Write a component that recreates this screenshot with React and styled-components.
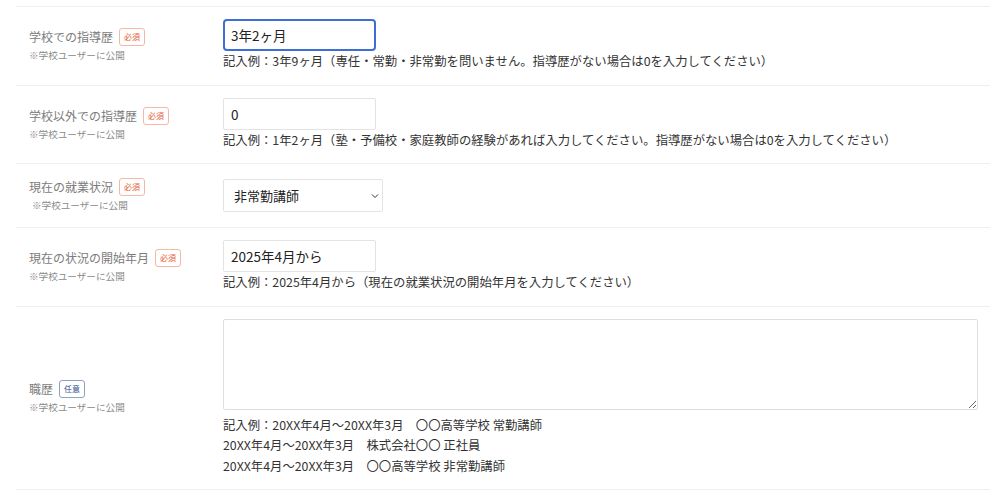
import React from "react";
import styled, { createGlobalStyle } from "styled-components";

const GlobalStyle = createGlobalStyle`
  html, body {
    margin: 0;
    padding: 0;
    background: #fff;
  }
  body {
    font-family: "Noto Sans CJK JP", "Noto Sans", sans-serif;
    color: #333;
  }
`;

const Form = styled.div`
  padding: 6px 9px 0 16px;
`;

const Row = styled.div`
  display: flex;
  align-items: center;
  border-top: 1px solid #efefef;
  padding: ${(p) => (p.$roomy ? "14px 12px 15px 13px" : "12px 12px 13px 13px")};

  &:last-child {
    border-bottom: 1px solid #efefef;
  }
`;

const LabelCol = styled.div`
  width: 194px;
  flex-shrink: 0;
  display: flex;
  flex-direction: column;
  gap: 2px;
`;

const LabelLine = styled.div`
  display: flex;
  align-items: center;
  gap: 6px;
  font-size: 12px;
  line-height: 18px;
  color: #7b7b7b;
`;

const Badge = styled.span`
  display: inline-block;
  font-size: 8px;
  line-height: 16px;
  padding: 0 4px;
  border-radius: 3px;
  background: #fff;
  border: 1px solid ${(p) => (p.$optional ? "#8ea2c4" : "#f6b7a4")};
  color: ${(p) => (p.$optional ? "#2f4f8a" : "#e85a36")};
`;

const Public = styled.div`
  font-size: 9.6px;
  line-height: 14px;
  color: #8a8a8a;
  padding-left: ${(p) => (p.$indent ? "3px" : "0")};
`;

const FieldCol = styled.div`
  flex: 1;
  display: flex;
  flex-direction: column;
  align-items: flex-start;
`;

const TextInput = styled.input`
  box-sizing: border-box;
  width: 153px;
  height: 32px;
  padding: 0 7px;
  font-family: inherit;
  font-size: 13.5px;
  color: #222;
  background: #fff;
  border: 1px solid #e3e3e3;
  border-radius: 2px;
  outline: none;

  &.focused {
    border: 2px solid #3d6ed6;
    border-radius: 4px;
    padding: 0 6px;
  }
`;

const SelectWrap = styled.div`
  position: relative;
  width: 160px;
  height: 33px;
`;

const Select = styled.select`
  appearance: none;
  box-sizing: border-box;
  width: 100%;
  height: 100%;
  padding: 0 22px 0 10px;
  font-family: inherit;
  font-size: 13px;
  color: #222;
  background: #fff;
  border: 1px solid #e3e3e3;
  border-radius: 2px;
  outline: none;
`;

const Chevron = styled.svg`
  position: absolute;
  right: 4px;
  top: 14px;
  width: 8px;
  height: 6px;
  pointer-events: none;
`;

const TextArea = styled.textarea`
  display: block;
  box-sizing: border-box;
  width: 100%;
  height: 91px;
  font-family: inherit;
  font-size: 13px;
  border: 1px solid #dedede;
  border-radius: 2px;
  outline: none;
  resize: vertical;
`;

const Help = styled.div`
  margin-top: ${(p) => (p.$gap ? "5px" : "0")};
  font-size: 12.35px;
  line-height: 20.5px;
  color: #333;
`;

function Label({ text, optional, indent }) {
  return (
    <LabelCol>
      <LabelLine>
        {text}
        <Badge $optional={optional}>{optional ? "任意" : "必須"}</Badge>
      </LabelLine>
      <Public $indent={indent}>※学校ユーザーに公開</Public>
    </LabelCol>
  );
}

export default function App() {
  return (
    <>
      <GlobalStyle />
      <Form>
        <Row>
          <Label text="学校での指導歴" />
          <FieldCol>
            <TextInput className="focused" defaultValue="3年2ヶ月" />
            <Help>
              記入例：3年9ヶ月（専任・常勤・非常勤を問いません。指導歴がない場合は0を入力してください）
            </Help>
          </FieldCol>
        </Row>
        <Row>
          <Label text="学校以外での指導歴" />
          <FieldCol>
            <TextInput defaultValue="0" />
            <Help>
              記入例：1年2ヶ月（塾・予備校・家庭教師の経験があれば入力してください。指導歴がない場合は0を入力してください）
            </Help>
          </FieldCol>
        </Row>
        <Row $roomy>
          <Label text="現在の就業状況" indent />
          <FieldCol>
            <SelectWrap>
              <Select defaultValue="非常勤講師">
                <option>常勤講師</option>
                <option>非常勤講師</option>
                <option>正社員</option>
              </Select>
              <Chevron viewBox="0 0 8 6">
                <path d="M1 1.5 L4 4.5 L7 1.5" fill="none" stroke="#333" strokeWidth="1" />
              </Chevron>
            </SelectWrap>
          </FieldCol>
        </Row>
        <Row>
          <Label text="現在の状況の開始年月" />
          <FieldCol>
            <TextInput defaultValue="2025年4月から" />
            <Help>記入例：2025年4月から（現在の就業状況の開始年月を入力してください）</Help>
          </FieldCol>
        </Row>
        <Row>
          <Label text="職歴" optional />
          <FieldCol>
            <TextArea />
            <Help $gap>
              記入例：20XX年4月～20XX年3月　〇〇高等学校 常勤講師
              <br />
              20XX年4月～20XX年3月　株式会社〇〇 正社員
              <br />
              20XX年4月～20XX年3月　〇〇高等学校 非常勤講師
            </Help>
          </FieldCol>
        </Row>
      </Form>
    </>
  );
}
